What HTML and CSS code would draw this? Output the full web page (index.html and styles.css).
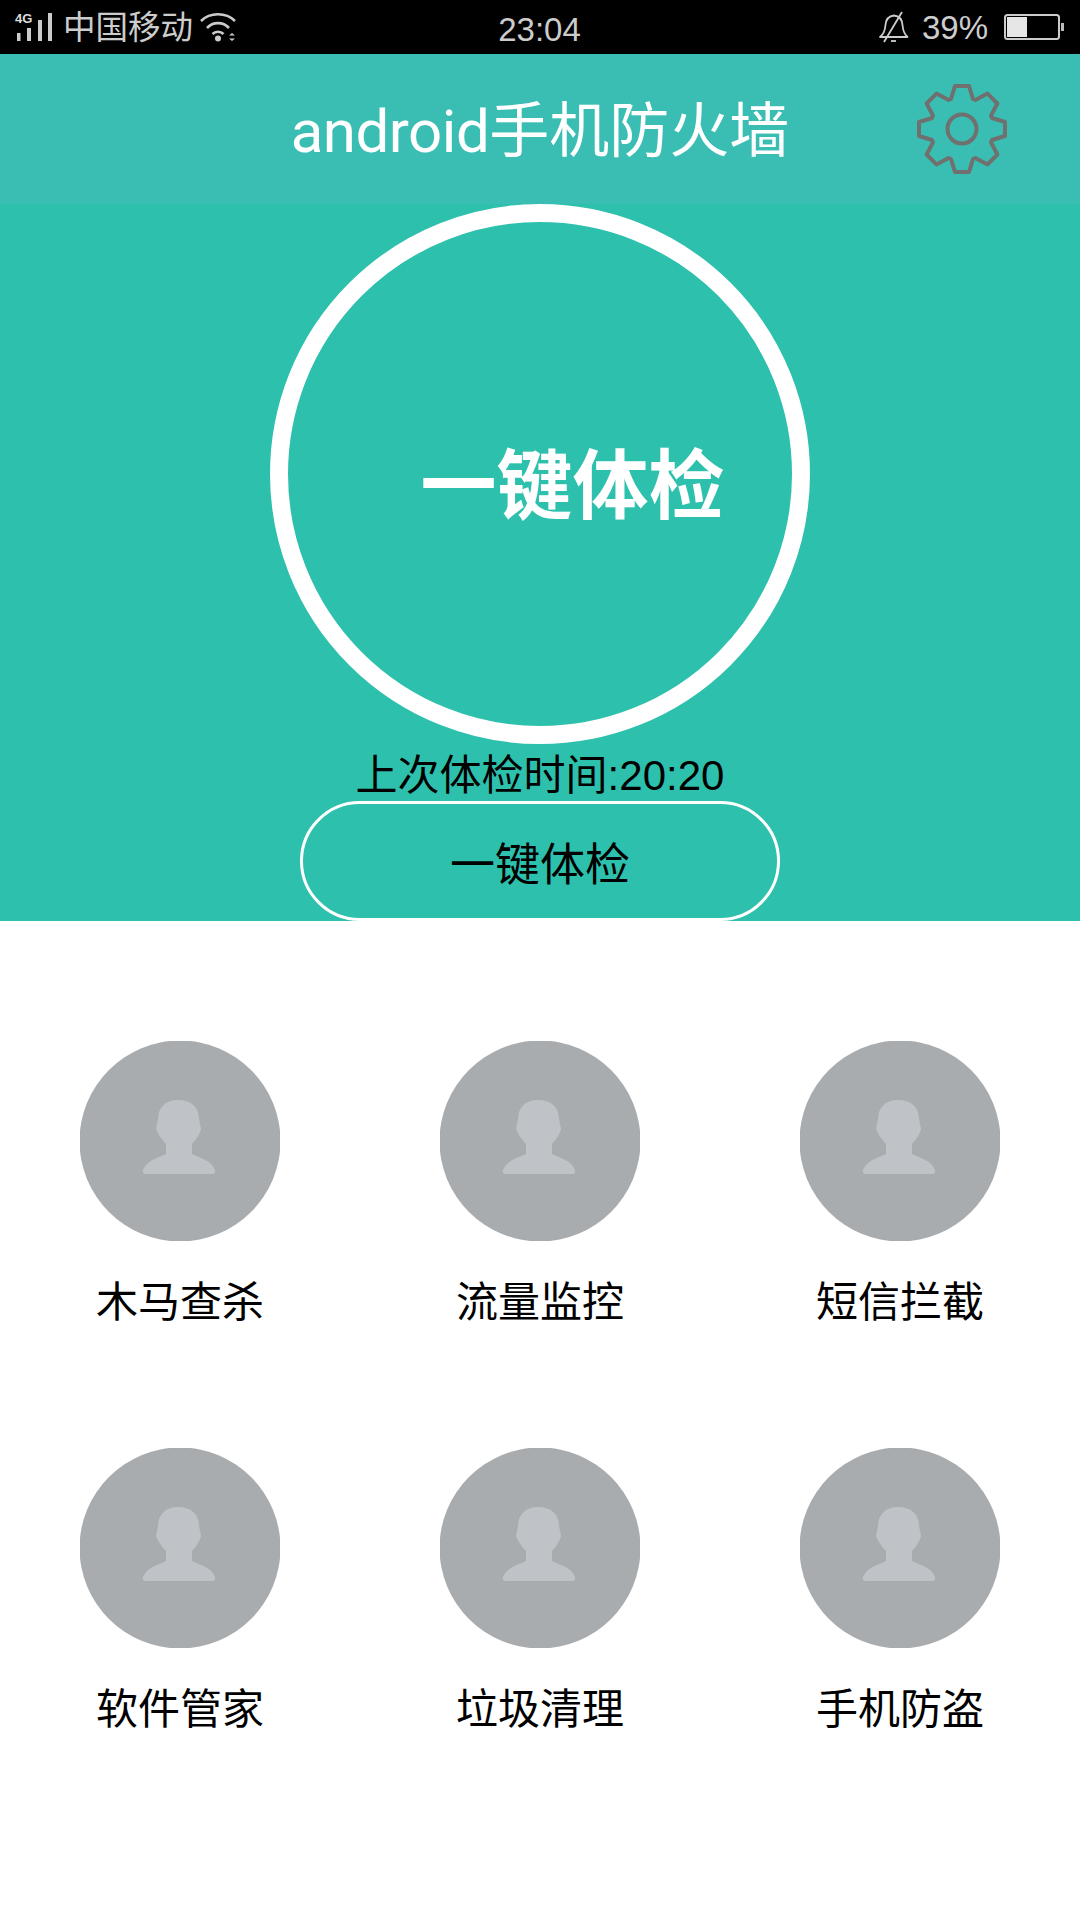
FILE: index.html
```html
<!DOCTYPE html>
<html lang="zh">
<head>
<meta charset="utf-8">
<title>android手机防火墙</title>
<link rel="stylesheet" href="styles.css">
</head>
<body>
<div class="status">
  <div class="status-left">
    <span class="signal">
      <span class="net">4G</span>
      <svg class="bars" viewBox="0 0 38 28" width="38" height="28"><rect x="2" y="20" width="3.5" height="8"/><rect x="12" y="15" width="4" height="13"/><rect x="23" y="7" width="4" height="21"/><rect x="33" y="0" width="4" height="28"/></svg>
    </span>
    <span class="carrier">中国移动</span>
    <svg class="wifi" viewBox="0 0 37 30" width="37" height="30"><g fill="none" stroke="#ccc" stroke-width="2.6"><path d="M1 9C10 0 26 0 35 9"/><path d="M7 16C13 9.500 23 9.500 29 16"/><path d="M12.500 22C15.500 19 20.500 19 23.500 22"/></g><circle cx="18" cy="26.500" r="3" fill="#ccc"/><path d="M29 23.500h6l-3-2.600zM29 26.500h6l-3 2.600z" fill="#ccc"/></svg>
  </div>
  <div class="time">23:04</div>
  <div class="status-right">
    <svg class="bell" viewBox="0 0 30 32" width="30" height="32"><g fill="none" stroke="#ccc" stroke-width="1.800" stroke-linejoin="round"><path d="M1 26C5 23 6 20 6.500 14C7 8 10 5 15 4.500C20 5 23 8 23.500 14C24 20 25 23 28.500 26Z"/><path d="M23 1L5 31"/><path d="M12 30h5"/></g></svg>
    <span class="pct">39%</span>
    <svg class="battery" viewBox="0 0 60 26" width="60" height="26"><rect x="1" y="1" width="54" height="24" rx="2.500" fill="none" stroke="#ccc" stroke-width="2"/><rect x="3" y="3" width="20" height="20" fill="#e6e6e6"/><rect x="57" y="9" width="3" height="8" fill="#bbb"/></svg>
  </div>
</div>

<header class="topbar">
  <span></span>
  <h1 class="title"><span class="title-latin">android</span>手机防火墙</h1>
  <svg class="gear" viewBox="-50 -50 100 100" width="100" height="100"><polygon points="-7,-43 7,-43 11,-30 13.400,-29 25.500,-35.400 35.400,-25.500 29,-13.400 30,-11 43,-7 43,7 30,11 29,13.400 35.400,25.500 25.500,35.400 13.400,29 11,30 7,43 -7,43 -11,30 -13.400,29 -25.500,35.400 -35.400,25.500 -29,13.400 -30,11 -43,7 -43,-7 -30,-11 -29,-13.400 -35.400,-25.500 -25.500,-35.400 -13.400,-29 -11,-30"/><circle cx="0" cy="0" r="14.500"/></svg>
</header>

<section class="hero">
  <div class="ring"><span class="ring-text">一键体检</span></div>
  <p class="last">上次体检时间:20:20</p>
  <div class="check-btn">一键体检</div>
</section>

<main class="grid">
  <div class="tool"><svg class="avatar" viewBox="0 0 200 200"><use href="#person"/></svg><span class="label">木马查杀</span></div>
  <div class="tool"><svg class="avatar" viewBox="0 0 200 200"><use href="#person"/></svg><span class="label">流量监控</span></div>
  <div class="tool"><svg class="avatar" viewBox="0 0 200 200"><use href="#person"/></svg><span class="label">短信拦截</span></div>
  <div class="tool"><svg class="avatar" viewBox="0 0 200 200"><use href="#person"/></svg><span class="label">软件管家</span></div>
  <div class="tool"><svg class="avatar" viewBox="0 0 200 200"><use href="#person"/></svg><span class="label">垃圾清理</span></div>
  <div class="tool"><svg class="avatar" viewBox="0 0 200 200"><use href="#person"/></svg><span class="label">手机防盗</span></div>
</main>

<svg class="defs" width="0" height="0">
  <defs>
    <g id="person">
      <circle cx="100" cy="100" r="100.500" fill="#a8acaf"/>
      <path fill="#bfc2c6" d="M98 59C112 59 119 67 119 78L121 88C119 95 115 100 112 103L112 113C120 117 131 119 135 129Q136 133 132 133L66 133Q62 133 63 129C67 119 78 117 86 113L86 103C83 100 79 95 76 88L78 78C78 67 85 59 98 59Z"/>
    </g>
  </defs>
</svg>
</body>
</html>
```

FILE: styles.css
```css
* {
  box-sizing: border-box;
}

html,
body {
  margin: 0;
  padding: 0;
  background: #fff;
}

body {
  width: 1080px;
  height: 1920px;
  overflow: hidden;
  font-family: "Liberation Sans", "Noto Sans CJK SC", sans-serif;
  color: #000;
}

.status {
  height: 54px;
  background: #000;
  color: #ccc;
  display: grid;
  grid-template-columns: 1fr auto 1fr;
  align-items: center;
  padding: 0 16px 0 15px;
}

.status-left {
  display: flex;
  align-items: center;
}

.signal {
  position: relative;
  display: block;
  width: 38px;
  height: 28px;
}

.net {
  position: absolute;
  left: 0;
  top: -1px;
  font-size: 13px;
  line-height: 13px;
  font-weight: 700;
  color: #ddd;
}

.bars {
  display: block;
  fill: #ccc;
}

.carrier {
  font-size: 32.500px;
  line-height: 40px;
  margin-left: 10px;
  padding-top: 2px;
}

.wifi {
  margin-left: 7px;
}

.time {
  font-size: 33px;
  line-height: 44px;
  padding-top: 5px;
}

.status-right {
  display: flex;
  align-items: center;
  justify-content: flex-end;
}

.pct {
  font-size: 33px;
  line-height: 40px;
  margin-left: 13px;
  margin-right: 16px;
  padding-top: 1px;
}

.topbar {
  height: 150px;
  background: #3abdb3;
  display: grid;
  grid-template-columns: 1fr auto 1fr;
  align-items: center;
}

.title {
  margin: 0;
  font-size: 60px;
  line-height: 70px;
  font-weight: 400;
  color: #fff;
  padding-top: 6px;
  white-space: nowrap;
}

.title-latin {
  font-family: "Roboto", "Liberation Sans", sans-serif;
  font-weight: 400;
  letter-spacing: -0.5px;
}

.gear {
  justify-self: end;
  margin-right: 68px;
  fill: none;
  stroke: #70706f;
  stroke-width: 4;
  stroke-linejoin: round;
}

.hero {
  height: 717px;
  background: #2dc0ac;
  display: flex;
  flex-direction: column;
  align-items: center;
}

.ring {
  width: 540px;
  height: 540px;
  border: 18px solid #fff;
  border-radius: 50%;
  display: flex;
  align-items: center;
  justify-content: center;
  padding: 25px 0 0 65px;
  flex: none;
}

.ring-text {
  font-size: 76px;
  font-weight: 700;
  line-height: 90px;
  color: #fff;
}

.last {
  margin: 0;
  height: 57px;
  font-size: 42px;
  line-height: 57px;
  padding-top: 3px;
  flex: none;
}

.check-btn {
  width: 480px;
  height: 120px;
  border: 3px solid #fff;
  border-radius: 60px;
  font-size: 45px;
  display: flex;
  align-items: center;
  justify-content: center;
  flex: none;
}

.grid {
  display: grid;
  grid-template-columns: repeat(3, 360px);
  grid-auto-rows: 407px;
  padding-top: 120px;
}

.tool {
  display: flex;
  flex-direction: column;
  align-items: center;
}

.avatar {
  display: block;
  width: 200px;
  height: 200px;
  filter: blur(0.6px);
}

.label {
  font-size: 42px;
  line-height: 56px;
  margin-top: 34px;
}

.defs {
  position: absolute;
}
```
